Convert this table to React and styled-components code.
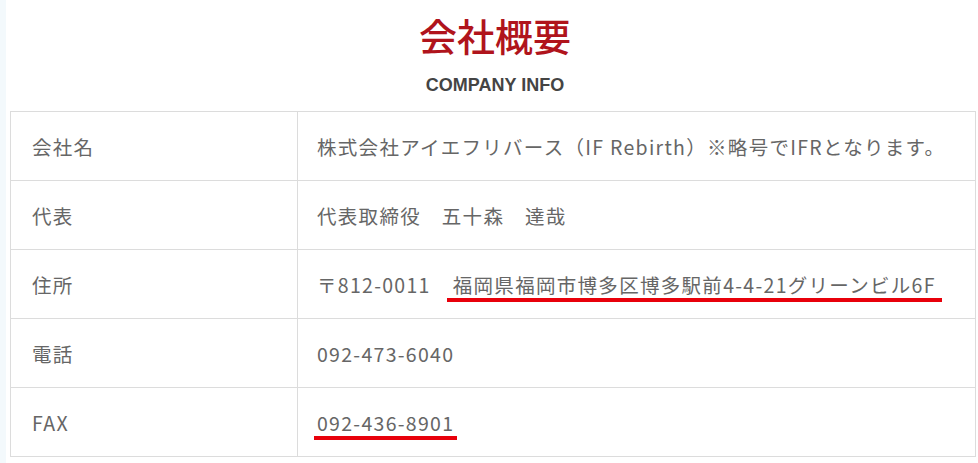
import React from "react";
import styled, { createGlobalStyle } from "styled-components";

const GlobalStyle = createGlobalStyle`
  html, body {
    margin: 0;
    padding: 0;
    background: #f3f9fc;
  }
  body {
    font-family: "Noto Sans CJK JP", "Noto Sans", sans-serif;
  }
`;

const rows = [
  { label: "会社名", value: "株式会社アイエフリバース（IF Rebirth）※略号でIFRとなります。" },
  { label: "代表", value: "代表取締役　五十森　達哉" },
  { label: "住所", zip: "〒812-0011", address: "福岡県福岡市博多区博多駅前4-4-21グリーンビル6F" },
  { label: "電話", value: "092-473-6040" },
  { label: "FAX", value: "092-436-8901", marked: true },
];

function _companyInfo({ className }) {
  return (
    <div className={className}>
      <header className="heading">
        <h2>会社概要</h2>
        <p>COMPANY INFO</p>
      </header>
      <Table>
        {rows.map((row) => (
          <Row key={row.label}>
            <Label>{row.label}</Label>
            <Value>
              {row.zip ? (
                <>
                  <Zip>{row.zip}</Zip>
                  <Marked $offset={6}>{row.address}</Marked>
                </>
              ) : row.marked ? (
                <Marked $offset={3}>{row.value}</Marked>
              ) : (
                row.value
              )}
            </Value>
          </Row>
        ))}
      </Table>
    </div>
  );
}

const CompanyInfo = styled(_companyInfo)`
  margin-left: 6px;
  min-height: 463px;
  background: #fff;
  padding: 11px 2px 0 4px;
  box-sizing: border-box;

  .heading {
    display: flex;
    flex-direction: column;
    align-items: center;
    padding-left: 4px;

    > h2 {
      margin: 0;
      font-size: 38px;
      line-height: 48px;
      font-weight: 500;
      color: #b0141c;
    }

    > p {
      margin: 16px 0 0;
      font-family: "Liberation Sans", Arial, sans-serif;
      font-size: 18px;
      line-height: 20px;
      font-weight: 700;
      color: #444;
    }
  }
`;

const Table = styled.div`
  margin-top: 16px;
  width: 966px;
  border: 1px solid #dcdcdc;
  box-sizing: border-box;
`;

const Row = styled.div`
  display: grid;
  grid-template-columns: 287px 1fr;
  height: 69px;
  border-top: 1px solid #dcdcdc;
  box-sizing: border-box;

  &:first-child {
    border-top: none;
    height: 68px;
  }
`;

const Cell = styled.div`
  display: flex;
  align-items: center;
  font-size: 19.5px;
  letter-spacing: 1.3px;
  color: #666;
  white-space: nowrap;
`;

const Label = styled(Cell)`
  padding-left: 21px;
  border-right: 1px solid #dcdcdc;
`;

const Value = styled(Cell)`
  padding-left: 19px;
`;

const Zip = styled.span`
  margin-right: 22px;
`;

const Marked = styled.span`
  position: relative;

  &::after {
    content: "";
    position: absolute;
    left: -${(p) => p.$offset}px;
    right: -${(p) => p.$offset}px;
    bottom: -3px;
    height: 4px;
    background: #e8000b;
  }
`;

export default function App() {
  return (
    <>
      <GlobalStyle />
      <CompanyInfo />
    </>
  );
}
